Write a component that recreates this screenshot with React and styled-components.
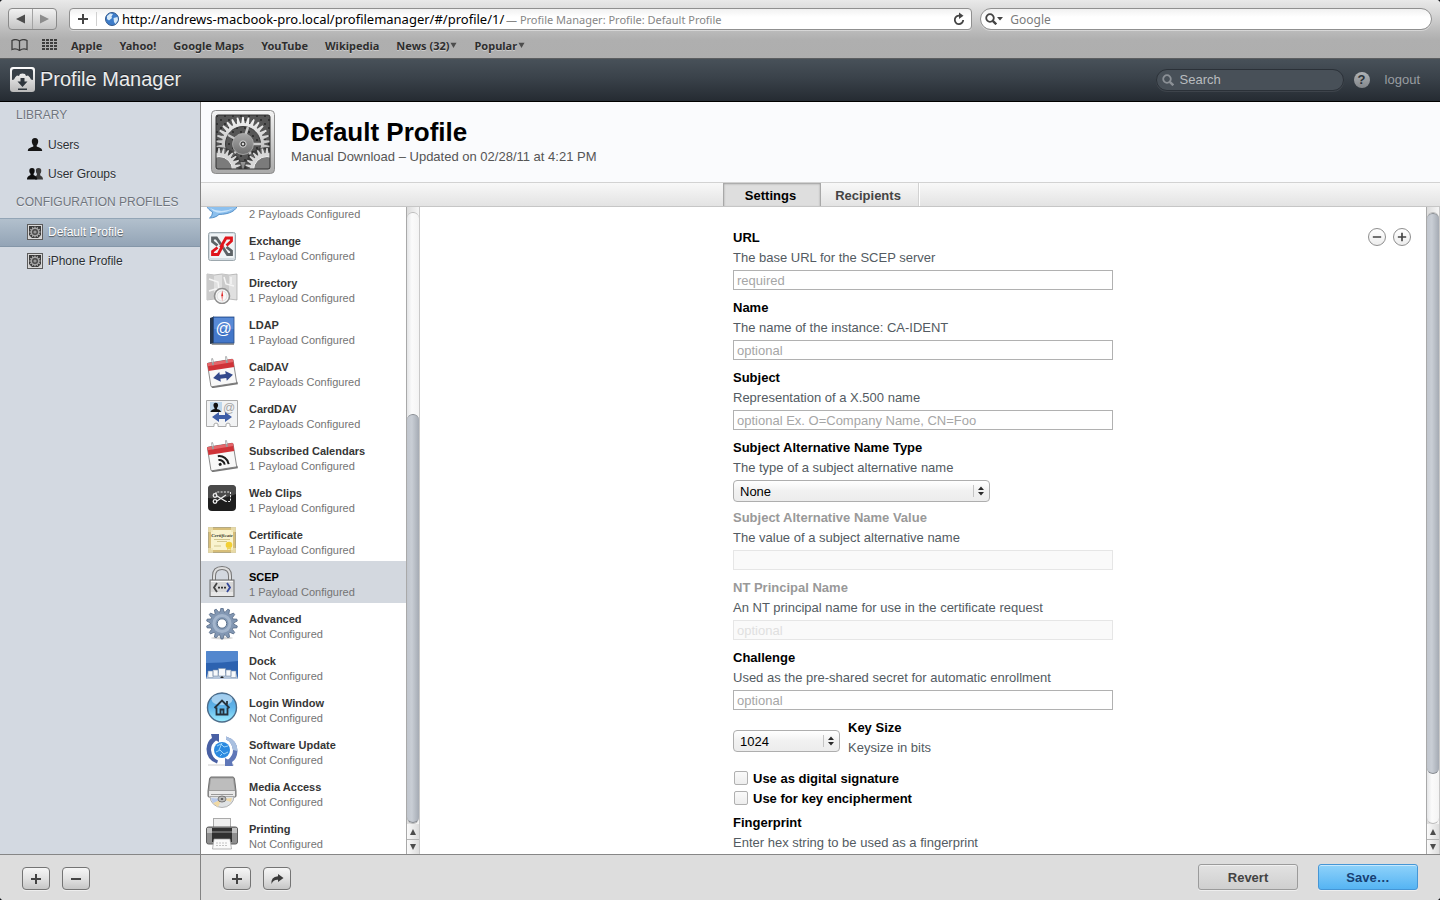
import React, { useLayoutEffect, useRef } from 'react'
import styled, { createGlobalStyle, css } from 'styled-components'

const GlobalStyle = createGlobalStyle`
  * {
    box-sizing: border-box;
  }

  body {
    margin: 0;
    background: #16181c;
    font-family: "Liberation Sans", Arial, sans-serif;
    font-size: 13px;
  }

  button, input, select {
    font-family: inherit;
    font-size: inherit;
    margin: 0;
  }

  svg {
    display: block;
    flex: none;
  }
`

const Window = styled.div`
  display: flex;
  flex-direction: column;
  height: 100vh;
  overflow: hidden;
  border-radius: 4px;
  background: white;
`

/* Browser toolbar */

const Chrome = styled.header`
  font-family: "Noto Sans", "Open Sans", sans-serif;
  background: linear-gradient(#e9e9e9 0, #d6d6d6 14px, #b9b9b9 32px, #afafaf 40px, #aeaeae 100%);
  border-bottom: 1px solid #5c5e60;
`

const AddressRow = styled.div`
  display: grid;
  grid-template-columns: auto 2fr 1fr;
  gap: 8px;
  padding: 8px 8px 4px;
`

const HistoryGroup = styled.div`
  display: flex;
  width: 49px;
  height: 22px;
  margin-right: 4px;
  border: 1px solid #8a8a8a;
  border-radius: 4px;
  background: linear-gradient(#f2f2f2, #c4c4c4);
`

const HistoryButton = styled.button`
  display: flex;
  flex: 1;
  align-items: center;
  justify-content: center;
  padding: 0;
  border: 0;
  background: none;

  & + & {
    border-left: 1px solid #a3a3a3;
  }
`

const AddressBar = styled.div`
  display: flex;
  align-items: center;
  height: 22px;
  padding: 0 6px 0 0;
  border: 1px solid #909090;
  border-radius: ${props => (props.$round ? '11px' : '4px')};
  background: linear-gradient(#f1f1f1, white 8px);
  box-shadow: 0 1px 0 rgba(255, 255, 255, 0.4);
  min-width: 0;
`

const BarButton = styled.button`
  display: flex;
  align-items: center;
  justify-content: center;
  width: ${props => props.$width}px;
  height: 14px;
  padding: 0;
  border: 0;
  background: none;
`

const AddButton = styled(BarButton)`
  border-right: 1px solid #d0d0d0;
  margin-right: 8px;
`

const UrlInput = styled.input`
  width: 387px;
  height: 20px;
  padding: 0 0 0 3px;
  border: 0;
  outline: 0;
  background: none;
  color: black;
  font-size: 13px;
`

const PageTitle = styled.span`
  flex: 1;
  overflow: hidden;
  white-space: nowrap;
  color: #868686;
  font-size: 11px;
`

const GoogleInput = styled.input`
  flex: 1;
  min-width: 0;
  padding: 0 3px;
  border: 0;
  outline: 0;
  background: none;
  font-size: 12px;

  &::placeholder {
    color: #7b7b7b;
    opacity: 1;
  }
`

const Toolbar = styled.nav`
  display: flex;
  align-items: center;
  gap: 14px;
  height: 24px;
  padding: 0 11px 2px;
`

const Bookmarks = styled.div`
  display: flex;
  gap: 17px;
`

const Bookmark = styled.a`
  display: flex;
  align-items: center;
  gap: 1px;
  color: #2e2e2e;
  font-size: 11px;
  font-weight: bold;
  text-decoration: none;
  text-shadow: 0 1px 0 rgba(255, 255, 255, 0.4);
  white-space: nowrap;
`

/* Application header */

const AppBar = styled.header`
  display: flex;
  align-items: center;
  height: 43px;
  padding: 0 20px 1px 10px;
  border-bottom: 1px solid black;
  background: linear-gradient(#485159, #3a424a 45%, #252b32);
`

const AppTitle = styled.h1`
  flex: 1;
  margin: 0 0 0 5px;
  color: #ececec;
  font-size: 20px;
  font-weight: normal;
  text-shadow: 0 -1px 0 rgba(0, 0, 0, 0.5);
`

const SearchBox = styled.label`
  display: flex;
  align-items: center;
  width: 188px;
  height: 22px;
  padding: 0 6px 0 5px;
  border: 1px solid #2b3138;
  border-radius: 11px;
  background: #485058;
  box-shadow: 0 1px 0 rgba(255, 255, 255, 0.08);
`

const SearchInput = styled.input`
  width: 100%;
  padding: 0 6px;
  border: 0;
  outline: 0;
  background: none;
  color: white;

  &::placeholder {
    color: #b9bcbf;
    opacity: 1;
  }
`

const HelpButton = styled.button`
  width: 16px;
  height: 16px;
  margin: 0 15px 0 10px;
  padding: 0;
  border: 0;
  border-radius: 50%;
  background: linear-gradient(#b0b3b6, #82868a);
  color: #2b3138;
  font-weight: bold;
  line-height: 16px;
`

const LogoutLink = styled.a`
  color: #999da1;
  text-decoration: none;
`

/* Sidebar */

const Body = styled.div`
  display: flex;
  flex: 1;
  min-height: 0;
`

const Column = styled.div`
  display: flex;
  flex-direction: column;
  min-height: 0;
`

const SidebarColumn = styled(Column)`
  flex: none;
  width: 201px;
  border-right: 1px solid #838383;
`

const MainColumn = styled(Column)`
  flex: 1;
  min-width: 0;
`

const Sidebar = styled.nav`
  flex: 1;
  background: #d3d9e1;
`

const GroupTitle = styled.h2`
  margin: 0;
  padding: 0 0 2px 16px;
  color: #6f757d;
  font-size: 12px;
  font-weight: normal;
  line-height: 27px;
  text-shadow: 0 1px 0 rgba(255, 255, 255, 0.6);
`

const NavLink = styled.a`
  display: flex;
  align-items: center;
  gap: 5px;
  height: 29px;
  padding: 0 0 2px 27px;
  color: #2b2f33;
  font-size: 12px;
  text-decoration: none;
  text-shadow: 0 1px 0 rgba(255, 255, 255, 0.5);

  ${props => props.$active && css`
    border-top: 1px solid #93a5b6;
    border-bottom: 1px solid #8496a8;
    background: linear-gradient(#b2c0cd, #93a4b6);
    color: white;
    text-shadow: 0 1px 1px rgba(0, 0, 0, 0.5);
  `}
`

const Footer = styled.footer`
  display: flex;
  align-items: flex-end;
  gap: ${props => props.$gap}px;
  height: 46px;
  padding: 0 22px 10px;
  border-top: 1px solid #868686;
  background: #dddddd;
`

const ToolGroup = styled.div`
  display: flex;
  flex: 1;
  gap: 12px;
`

const ToolButton = styled.button`
  display: flex;
  align-items: center;
  justify-content: center;
  width: 28px;
  height: 23px;
  padding: 0;
  border: 1px solid #747474;
  border-radius: 4px;
  background: linear-gradient(#f6f6f6, #e2e2e2 50%, #c6c6c6);
  box-shadow: 0 1px 0 #eeeeee;
`

const ActionButton = styled.button`
  width: 100px;
  height: 26px;
  border: 1px solid ${props => (props.$primary ? '#4596d6' : '#9b9b9b')};
  border-radius: 3px;
  background: ${props => (props.$primary
    ? 'linear-gradient(#8fd2fa, #55b4f3)'
    : 'linear-gradient(#e2e2e2, #cfcfcf)')};
  box-shadow: inset 0 1px 0 rgba(255, 255, 255, 0.5), 0 1px 0 #eeeeee;
  color: ${props => (props.$primary ? '#173f73' : '#434343')};
  font-weight: bold;
`

/* Profile header and tabs */

const ProfileHeader = styled.div`
  display: flex;
  align-items: center;
  gap: 16px;
  height: 80px;
  padding: 0 10px;
  background: #fafbfd;
`

const ProfileTitle = styled.h2`
  margin: 0;
  color: black;
  font-size: 26px;
  line-height: 30px;
`

const ProfileMeta = styled.p`
  margin: 0;
  color: #555555;
  line-height: 20px;
`

const TabBar = styled.div`
  display: flex;
  justify-content: center;
  height: 25px;
  border-top: 1px solid #d2d2d2;
  border-bottom: 1px solid #c6c6c6;
  background: linear-gradient(#f8f8f8, #e3e3e3);
`

const Tab = styled.button`
  width: 98px;
  padding: 2px 2px 0 0;
  border: 0;
  border-right: 1px solid ${props => (props.$active ? '#a8a8a8' : '#d2d2d2')};
  border-left: ${props => (props.$active ? '1px solid #a8a8a8' : 0)};
  background: ${props => (props.$active ? '#dedede' : 'none')};
  box-shadow: ${props => (props.$active ? 'inset 0 1px 2px rgba(0, 0, 0, 0.3)' : '1px 0 0 white')};
  color: ${props => (props.$active ? 'black' : '#444444')};
  font-weight: bold;
`

const Panels = styled.div`
  display: flex;
  flex: 1;
  min-height: 0;
`

/* Payload list */

const PayloadList = styled.div`
  width: 205px;
  overflow-y: auto;
  scrollbar-width: none;
`

const PayloadRow = styled.a`
  display: flex;
  gap: 11px;
  height: 42px;
  padding: 5px;
  background: ${props => (props.$active ? '#d3d8df' : 'white')};
  color: ${props => (props.$active ? 'black' : '#363636')};
  font-size: 11px;
  line-height: 15px;
  text-decoration: none;
`

const PayloadText = styled.div`
  padding-top: 4px;
  white-space: nowrap;
`

const PayloadStatus = styled.div`
  color: #747474;
`

/* Scroll bars */

const Bar = styled.div`
  display: flex;
  flex: none;
  flex-direction: column;
  width: 14px;
  border-right: 1px solid #c9c9c9;
  border-left: 1px solid #a9a9a9;
  background: linear-gradient(to right, #dcdcdc, #f6f6f6);
`

const Track = styled.div`
  display: flex;
  flex: 1;
  flex-direction: column;
  margin-top: 5px;
  border: 1px solid #bcbcbc;
  border-width: 1px 0;
  border-radius: 7px;
  background: linear-gradient(to right, #e4e5e7, #fbfbfb 40%, #f4f4f4);
`

const TrackSpace = styled.div`
  flex: ${props => props.$size} 0 0;
`

const Thumb = styled.div`
  flex: ${props => props.$size} 0 0;
  border: 1px solid #85898f;
  border-width: 1px 0;
  border-radius: 7px;
  background: linear-gradient(to right, #c0c5cd, #c9ced5 40%, #a5abb4);
`

const ArrowButton = styled.button`
  display: flex;
  align-items: center;
  justify-content: center;
  height: 15px;
  padding: 0;
  border: 0;
  background: linear-gradient(to right, #fafafa, #dddddd);

  & + & {
    border-top: 1px solid #b5b5b5;
  }
`

/* Settings form */

const Settings = styled.div`
  display: grid;
  flex: 1;
  grid-template-columns: 1fr 380px 1fr;
  align-content: start;
  padding-top: 20px;
  overflow: hidden;
`

const Form = styled.form`
  grid-column: 2;
  padding-top: 1px;
`

const RowTools = styled.div`
  display: flex;
  align-items: center;
  justify-content: flex-end;
  gap: 7px;
  height: 20px;
  padding-right: 15px;
`

const RoundButton = styled.button`
  display: flex;
  align-items: center;
  justify-content: center;
  width: 18px;
  height: 18px;
  padding: 0;
  border: 1px solid #8e8e8e;
  border-radius: 50%;
  background: linear-gradient(white, #ededed);
`

const Field = styled.div`
  min-height: 70px;
  line-height: 20px;
`

const FieldLabel = styled.label`
  display: block;
  color: ${props => (props.$disabled ? '#999999' : 'black')};
  font-weight: bold;
`

const FieldHint = styled.div`
  color: #535b62;
`

const TextInput = styled.input`
  display: block;
  width: 100%;
  height: 20px;
  margin-top: 2px;
  padding: 0 3px;
  border: 1px solid #b1b1b1;
  outline: 0;
  background: white;

  &::placeholder {
    color: #a6a6a6;
    opacity: 1;
  }

  &:disabled {
    border-color: #e6e6e6;
    background: #fafafa;
  }

  &:disabled::placeholder {
    color: #e0e0e0;
  }
`

const SelectWrap = styled.div`
  position: relative;
  width: ${props => props.$width}px;
`

const Select = styled.select`
  display: block;
  appearance: none;
  width: 100%;
  height: 22px;
  padding: 0 24px 0 6px;
  border: 1px solid #aeaeae;
  border-radius: 4px;
  outline: 0;
  background: linear-gradient(white, #f1f1f1 50%, #ececec);
  color: black;
`

const SelectArrows = styled.svg`
  position: absolute;
  top: 5px;
  right: 3px;
  pointer-events: none;
`

const TypeSelect = styled(SelectWrap)`
  margin-top: 2px;
`

const KeySizeRow = styled.div`
  display: flex;
  align-items: center;
  gap: 8px;
  margin-bottom: 10px;
  line-height: 20px;
`

const KeySelect = styled(SelectWrap)`
  margin-top: 6px;
`

const CheckLabel = styled.label`
  display: flex;
  align-items: center;
  gap: 5px;
  height: 20px;
  padding-left: 1px;
  font-weight: bold;
`

const Checkbox = styled.input`
  appearance: none;
  width: 14px;
  height: 14px;
  border: 1px solid #b0b0b0;
  border-radius: 2px;
  background: linear-gradient(#fafafa, #ededed);
`

const CheckGroup = styled.div`
  margin-bottom: 5px;
`

/* Drawings */

const gear = (cx, cy, teeth, outer, inner) => {
  const step = (Math.PI * 2) / teeth
  const points = []
  for (let i = 0; i < teeth; i++) {
    const a = i * step - Math.PI / 2
    ;[[-0.38, inner], [-0.14, outer], [0.14, outer], [0.38, inner]].forEach(([t, r]) => {
      points.push(`${(cx + Math.cos(a + t * step) * r).toFixed(2)} ${(cy + Math.sin(a + t * step) * r).toFixed(2)}`)
    })
  }
  return `M${points.join('L')}Z`
}

const GearTile = ({ size, id }) => (
  <svg width={size} height={size} viewBox="0 0 64 64">
    <defs>
      <linearGradient id={`${id}f`} x1="0" y1="0" x2="0" y2="1">
        <stop offset="0" stopColor="#f4f4f4" />
        <stop offset="1" stopColor="#a9a9a9" />
      </linearGradient>
      <linearGradient id={`${id}m`} x1="0" y1="0" x2="0" y2="1">
        <stop offset="0" stopColor="#f6f6f6" />
        <stop offset="0.7" stopColor="#b4b4b4" />
        <stop offset="1" stopColor="#777777" />
      </linearGradient>
      <linearGradient id={`${id}h`} x1="0" y1="0" x2="0" y2="1">
        <stop offset="0" stopColor="#a8a8a8" />
        <stop offset="1" stopColor="#6f6f6f" />
      </linearGradient>
      <clipPath id={`${id}c`}>
        <rect x="5" y="5" width="54" height="54" rx="2" />
      </clipPath>
      <pattern id={`${id}p`} width="8" height="8" patternUnits="userSpaceOnUse">
        <rect width="8" height="8" fill="#565656" />
        <circle cx="2" cy="2" r="1" fill="#262626" />
        <circle cx="6" cy="6" r="1" fill="#262626" />
      </pattern>
    </defs>
    <rect x="0.5" y="0.5" width="63" height="63" rx="4" fill={`url(#${id}f)`} stroke="#8c8c8c" />
    <rect x="5" y="5" width="54" height="54" rx="2" fill={`url(#${id}p)`} />
    <g clipPath={`url(#${id}c)`}>
      <path d={gear(32, 34, 30, 27, 21)} fill={`url(#${id}m)`} />
      <circle cx="32" cy="34" r="17.500" fill={`url(#${id}p)`} stroke="#3c3c3c" />
      <path d="M33 29 37 17M36 34H50M30 32 17 25M30 36 20 47M34 37 43 48" stroke="#c8c8c8" strokeWidth="2.4" />
      <circle cx="32" cy="34" r="10.500" fill={`url(#${id}h)`} stroke="#b0b0b0" strokeWidth="0.800" />
      <circle cx="32" cy="34" r="3.200" fill="#444" stroke="#ddd" />
      <circle cx="32" cy="34" r="1.200" fill="#ddd" />
      <circle cx="8" cy="60" r="23" fill="#333" opacity="0.700" />
      <circle cx="56" cy="60" r="23" fill="#333" opacity="0.700" />
      <path d={gear(8, 60, 28, 22, 17)} fill="#d8d8d8" />
      <circle cx="8" cy="60" r="13.500" fill="#7b7b7b" stroke="#f2f2f2" />
      <path d={gear(56, 60, 28, 22, 17)} fill="#d8d8d8" />
      <circle cx="56" cy="60" r="13.500" fill="#7b7b7b" stroke="#f2f2f2" />
    </g>
    <rect x="5" y="5" width="54" height="54" rx="2" fill="none" stroke="#333" />
  </svg>
)

const SmallTile = () => (
  <svg width="16" height="16" viewBox="0 0 16 16">
    <rect x="0.5" y="0.5" width="15" height="15" fill="#d8d8d8" stroke="#5b5b5b" />
    <rect x="2" y="2" width="12" height="12" fill="#3a3a3a" />
    <path d={gear(8, 8, 12, 5.6, 4.3)} fill="#a5a5a5" />
    <circle cx="8" cy="8" r="3" fill="#4a4a4a" />
    <circle cx="8" cy="8" r="1.6" fill="#999" />
    <path d="M2 14v-3l3 3zM14 14v-3l-3 3z" fill="#ccc" />
  </svg>
)

const person = 'M8 1C5.800 1 4.600 2.600 4.800 4.800 4.900 6.400 5.600 7.600 6.300 8.300V9.600C5.400 10.400 0.800 10.400 0.800 14H15.200C15.200 10.400 10.600 10.400 9.700 9.600V8.300C10.400 7.600 11.100 6.400 11.200 4.800 11.400 2.600 10.200 1 8 1Z'

const UserIcon = () => (
  <svg width="16" height="16" viewBox="0 0 16 16">
    <path d={person} fill="#151515" />
  </svg>
)

const GroupIcon = () => (
  <svg width="16" height="16" viewBox="0 0 16 16">
    <path d="M11.500 2C9.500 2 8.700 3.300 8.900 5 9 6.300 9.300 7.200 9.900 7.800V9C9.600 9.800 8 10 8 13.500H16C16 10.200 14 10.200 13.200 9.200V7.800C13.800 7.200 14.200 6.300 14.300 5 14.400 3.300 13.500 2 11.500 2Z" fill="#3b3b3b" />
    <path d="M5 2C3 2 2.200 3.300 2.300 5 2.400 6.300 2.900 7.200 3.500 7.800V9C2.700 9.800 0 10 0 13.500H10.200C10.200 10 7.400 9.800 6.600 9V7.800C7.200 7.200 7.600 6.300 7.700 5 7.800 3.300 7 2 5 2Z" fill="#0e0e0e" />
  </svg>
)

const AppLogo = () => (
  <svg width="25" height="25" viewBox="0 0 25 25">
    <defs>
      <linearGradient id="logo" x1="0" y1="0" x2="0" y2="1">
        <stop offset="0" stopColor="#ffffff" />
        <stop offset="1" stopColor="#b9b9b9" />
      </linearGradient>
    </defs>
    <rect width="25" height="25" rx="3" fill="url(#logo)" />
    <path d="M2 13V4Q2 2 4 2H21Q23 2 23 4V13L21 12.500A10 10 0 0 0 18 8.500L16 9 15 7Q12.500 6 10 7L9 9 7 8.500A10 10 0 0 0 4 12.500Z" fill="#373f47" />
    <path d="M10.500 11H14.500V14.500H17.500L12.500 20 7.500 14.500H10.500ZM8 21.500H17V23H8Z" fill="#2f363d" />
  </svg>
)

const Calendar = ({ children }) => (
  <g transform="rotate(-9 16 17)">
    <path d="M3 28H30V30.500H4Z" fill="#777" />
    <rect x="3" y="5" width="26" height="24" rx="1" fill="#f8f8f8" stroke="#777" strokeWidth="0.800" />
    <rect x="3" y="5" width="26" height="8" fill="#cf3338" />
    <rect x="3" y="5" width="26" height="3" fill="#e5666a" />
    <path d="M8.500 7V2M22.500 7V2" stroke="#9a9a9a" strokeWidth="2" strokeLinecap="round" />
    <path d="M8.500 5V2M22.500 5V2" stroke="#e8eef2" strokeWidth="0.800" />
    {children}
  </g>
)

const doubleArrow = 'M0 5 7 0V3H13V0L20 5 13 10V7H7V10Z'

const drawings = {
  chat: (
    <>
      <path d="M16 5C7 5 0.500 9.500 0.500 16 0.500 19.500 3 22 6.500 24 6.500 27 5 29 3.500 30 7.500 30 11 28.500 13 26.400 23 26.500 31.500 22.500 31.500 16 31.500 9.500 25 5 16 5Z" fill="#8cc0ee" stroke="#5590c8" />
      <path d="M4 20Q15 26 28 20Q20 25.500 11 24.500Q7 23.500 4 20Z" fill="#c9e4fb" />
    </>
  ),
  exchange: (
    <>
      <rect x="2.500" y="2.500" width="27" height="28" rx="2" fill="#d5dde2" stroke="#9ca7ad" />
      <rect x="4" y="4" width="24" height="24" rx="1" fill="#f0f4f6" />
      <g fill="none" strokeWidth="2.800">
        <path d="M15 14.500 10.500 8H6.500V11.500L11.500 15.500" stroke="#5d6366" />
        <path d="M17 17.500 21.500 24.500H25.500V21L20.500 17" stroke="#5d6366" />
        <path d="M14.500 17.500 20 8H25.500V11L20.500 15.500" stroke="#e0151b" />
        <path d="M17 15 12 24.500H6.500V21.500L11.500 17.500" stroke="#e0151b" />
      </g>
    </>
  ),
  directory: (
    <>
      <path d="M1 2 8 3 16 2 23 3 31 2V28L23 27 16 28 8 27 1 28Z" fill="#e0e0e0" stroke="#a3a3a3" strokeWidth="0.700" />
      <path d="M1 2 8 3V27L1 28ZM16 2 23 3V27L16 28Z" fill="#cbcbcb" />
      <path d="M3 7 12 10 13 18M18 5 20 12 28 14M3 19 10 17 14 24M25 5V12" stroke="#f5f5f5" strokeWidth="1.500" fill="none" />
      <circle cx="16" cy="24" r="7.500" fill="#f8f8f8" stroke="#909090" strokeWidth="1.600" />
      <circle cx="16" cy="24" r="5" fill="none" stroke="#ccc" strokeWidth="0.600" />
      <path d="M15.200 24 16.200 18.500 17.200 24Z" fill="#d22" />
      <path d="M15.200 24 16.200 29.500 17.200 24Z" fill="#e88" />
    </>
  ),
  ldap: (
    <>
      <path d="M5 29H28V31H6Z" fill="#333" opacity="0.500" />
      <path d="M4 4 8 2.500V29L4 30Z" fill="#26374e" />
      <rect x="7.500" y="3" width="20.500" height="26" fill="#4377c9" stroke="#264b86" strokeWidth="0.800" />
      <rect x="8" y="4" width="19.500" height="11" fill="#6898e0" opacity="0.600" />
      <text x="17.500" y="20" fontSize="16" textAnchor="middle" fill="white" fontFamily="Liberation Sans, sans-serif">@</text>
    </>
  ),
  caldav: (
    <Calendar>
      <path d={doubleArrow} transform="translate(6.500 15.500)" fill="#33498c" />
    </Calendar>
  ),
  carddav: (
    <>
      <path d="M0.500 2.500H31.500V28.500H24V26Q22 24 20 26V28.500H12V26Q10 24 8 26V28.500H0.500Z" fill="#f2f3f4" stroke="#aaa" />
      <rect x="4" y="4" width="12" height="10" fill="#bed7ec" />
      <path d={person} transform="translate(4 4) scale(0.720)" fill="#111" />
      <text x="23" y="14" fontSize="12" textAnchor="middle" fill="#a5a5a5" fontFamily="Liberation Sans, sans-serif">@</text>
      <path d={doubleArrow} transform="translate(6 14)" fill="#3e5ea7" />
    </>
  ),
  subscribed: (
    <Calendar>
      <g fill="none" stroke="#1d1d1d" strokeWidth="2">
        <path d="M12 19.500A5.500 5.500 0 0 1 17.500 25M12 15.500A9.500 9.500 0 0 1 21.500 25" />
      </g>
      <circle cx="13" cy="24" r="1.500" fill="#1d1d1d" />
    </Calendar>
  ),
  webclips: (
    <>
      <rect x="2" y="3" width="28" height="26" rx="4" fill="#1e1e1e" />
      <path d="M2 16V7Q2 3 6 3H26Q30 3 30 7V12Q16 18 2 16Z" fill="#5d5d5d" opacity="0.700" />
      <path d="M10 12V10H24.500V19.500H20" fill="none" stroke="#eee" strokeDasharray="2 1.300" />
      <g stroke="#eee" fill="none" strokeWidth="1.300">
        <path d="M11 14 20 19.500M11 19 20 13" />
        <circle cx="9" cy="13.500" r="1.800" />
        <circle cx="9" cy="19.500" r="1.800" />
      </g>
    </>
  ),
  certificate: (
    <>
      <rect x="2.500" y="3.500" width="27" height="25" fill="#d7be79" stroke="#b4a983" />
      <rect x="5" y="6" width="22" height="20" fill="#f9f3cf" />
      <path d="M2 3H7V8H2ZM25 3H30V8H25ZM2 24H7V29H2ZM25 24H30V29H25Z" fill="#efe5b8" opacity="0.700" />
      <text x="16" y="13" fontSize="5" fontStyle="italic" fontWeight="bold" textAnchor="middle" fill="#3c3c2d" fontFamily="Liberation Serif, serif">Certificate</text>
      <path d="M8 15.500H24M11 17.500H21M8 22H15" stroke="#c9bb80" strokeWidth="0.800" />
      <circle cx="23" cy="21" r="3.300" fill="#f2cf34" />
      <path d="M21 23V26L23 25 25 26V23Z" fill="#ecd257" />
    </>
  ),
  scep: (
    <>
      <path d="M8 15V10Q8 2 16 2 24 2 24 10V15" fill="none" stroke="#777" strokeWidth="4" />
      <path d="M8 15V10Q8 2 16 2 24 2 24 10V15" fill="none" stroke="#dedede" strokeWidth="2" />
      <rect x="4" y="14" width="24" height="16.500" fill="#d7d7d7" stroke="#6b6b6b" />
      <path d="M5 15.500H27M5 27H27M5 29H27" stroke="#f8f8f8" />
      <g fill="none" stroke="#444" strokeWidth="1.800">
        <path d="M11 17 8 21.500 11 26" />
        <path d="M21 17 24 21.500 21 26" stroke="#34489b" />
      </g>
      <path d="M12 20.700H14V22.500H12ZM15 20.700H17V22.500H15ZM18 20.700H20V22.500H18Z" fill="#333" />
    </>
  ),
  advanced: (
    <>
      <ellipse cx="16" cy="30" rx="11" ry="1.500" fill="#bbb" opacity="0.600" />
      <path d={gear(16, 15.500, 14, 15.500, 11.800)} fill="#8297b3" stroke="#566a85" strokeWidth="0.800" />
      <circle cx="16" cy="15.500" r="9.500" fill="#a3b5cc" />
      <circle cx="16" cy="15.500" r="6.500" fill="#8298b4" />
      <circle cx="16" cy="15.500" r="4.700" fill="white" stroke="#5d728d" />
    </>
  ),
  dock: (
    <>
      <rect x="0" y="1" width="32" height="28" rx="1" fill="#2c62b0" />
      <path d="M0 1H32V11Q16 13 0 13Z" fill="#6497dc" opacity="0.700" />
      <path d="M2 23H30L32 29H0Z" fill="#b6c6db" />
      <path d="M2 21H7V27.500H2ZM7 20H12V26H7ZM12.500 18.500H19.500V26H12.500ZM20 20H25V26H20ZM25 21H30V27.500H25Z" fill="#f7f9fb" stroke="#8296b0" strokeWidth="0.600" />
      <path d="M16 26 18 28H14Z" fill="#222" />
    </>
  ),
  login: (
    <>
      <defs>
        <linearGradient id="orb" x1="0" y1="0" x2="0" y2="1">
          <stop offset="0" stopColor="#4f9ad6" />
          <stop offset="0.500" stopColor="#5fb4ea" />
          <stop offset="1" stopColor="#9ceeff" />
        </linearGradient>
      </defs>
      <circle cx="16" cy="15.500" r="14.500" fill="url(#orb)" stroke="#4c6c8a" strokeWidth="1.400" />
      <ellipse cx="16" cy="7.500" rx="10.500" ry="5.500" fill="#d9edfb" opacity="0.600" />
      <path d="M8.500 16 16 8.500 23.500 16M21 12.500V9M10.500 15.500V22.500H21.500V15.500M14.500 22.500V17.500H17.500V22.500" fill="none" stroke="#26323c" strokeWidth="1.800" />
    </>
  ),
  update: (
    <>
      <path d="M2 31H28" stroke="#ccc" />
      <circle cx="16" cy="16" r="8" fill="#2c8ae0" />
      <path d="M11 12 15 10 18 13 22 12M10 18 14 16 18 20 22 18M14 22 16 20M16 9 13 16" stroke="#b9e8ff" strokeWidth="0.800" fill="none" />
      <path d="M11 29.500Q0.500 26 0.500 15 1 7 6 4L5 0H13V8L10 6.500Q5 10 5 16 6 24 12 26.500Z" fill="#4960a4" />
      <path d="M20 2.500Q31.500 6 31.500 17 31 25 26 28L27 32H19V24L22 25.500Q27 22 27 16 26 8 20 5.500Z" fill="#5f77b8" />
      <path d="M20 2.500Q31.500 6 31.500 17L27 16Q26 8 20 5.500Z" fill="#a9c0e0" />
    </>
  ),
  media: (
    <>
      <path d="M5 1H27Q28 1 28.500 3L30 15V20Q30 21 29 21H3Q2 21 2 20V15L3.500 3Q4 1 5 1Z" fill="#9d9d9d" stroke="#6f6f6f" />
      <path d="M5 2.500H27L28.500 14H3.500Z" fill="#bdbdbd" />
      <rect x="3" y="15" width="26" height="5.500" fill="#e9e9e9" />
      <path d="M4 20.500H28A12 11 0 0 1 4 20.500Z" fill="#dfe2e4" stroke="#999" strokeWidth="0.700" />
      <path d="M16 23 7 27 12 31ZM16 23 26 22 25 26Z" fill="#f0d9a5" />
      <path d="M16 23 5 22 7 27Z" fill="#b7c9ec" />
      <ellipse cx="16" cy="23" rx="4" ry="3" fill="#bbb" stroke="#777" />
      <ellipse cx="16" cy="23" rx="1.300" ry="1" fill="#555" />
      <path d="M5 18.500H27" stroke="#999" />
    </>
  ),
  printing: (
    <>
      <rect x="7.500" y="0.500" width="17" height="14" fill="#efefef" stroke="#aaa" />
      <rect x="0.500" y="9" width="31" height="17" rx="2" fill="#8f8f8f" stroke="#5d5d5d" />
      <rect x="1" y="10" width="30" height="5" fill="#c2c2c2" />
      <rect x="6" y="10" width="20" height="14" fill="#303030" />
      <path d="M6 14H26" stroke="#999" />
      <path d="M8 21H24L25.500 31H6.500Z" fill="#fafafa" stroke="#9a9a9a" strokeWidth="0.700" />
      <path d="M10 25H22M10 27.500H21" stroke="#c4c4c4" strokeDasharray="2 1" />
    </>
  ),
}

const PayloadIcon = ({ name }) => (
  <svg width="32" height="32" viewBox="0 0 32 32">{drawings[name]}</svg>
)

const Triangle = ({ d, width = 8, height = 8, fill = '#4d4d4d' }) => (
  <svg width={width} height={height} viewBox="0 0 8 8">
    <path d={d} fill={fill} />
  </svg>
)

const Plus = ({ size = 12 }) => (
  <svg width={size} height={size} viewBox="0 0 12 12">
    <path d="M6 1V11M1 6H11" stroke="#444444" strokeWidth="2" />
  </svg>
)

const Minus = ({ size = 12 }) => (
  <svg width={size} height={size} viewBox="0 0 12 12">
    <path d="M1 6H11" stroke="#444444" strokeWidth="2" />
  </svg>
)

const Globe = () => (
  <svg width="14" height="14" viewBox="0 0 14 14">
    <circle cx="7" cy="7" r="6.500" fill="#3d7cc9" stroke="#345a8d" />
    <path d="M2 4 5 1.500 8 2 6.500 4.500 7 6 4 8.500 2 7ZM8.500 6 12.500 5 13 8 10.500 12 9 10Z" fill="#d6e9f8" />
  </svg>
)

const Magnifier = ({ color, caret }) => (
  <svg width={caret ? 18 : 12} height="12" viewBox={caret ? '0 0 18 12' : '0 0 12 12'}>
    <circle cx="5" cy="5" r="3.800" fill="none" stroke={color} strokeWidth="1.800" />
    <path d="M7.800 7.800 11.300 11.300" stroke={color} strokeWidth="2.400" />
    {caret && <path d="M12 4H18L15 7.500Z" fill={color} />}
  </svg>
)

const BookIcon = () => (
  <svg width="17" height="12" viewBox="0 0 17 12">
    <path d="M8.500 2Q5 -0.500 1 1.500V10.500Q5 9 8.500 11.500 12 9 16 10.500V1.500Q12 -0.500 8.500 2V11" fill="none" stroke="#3d3d3d" strokeWidth="1.300" />
  </svg>
)

const GridIcon = () => (
  <svg width="15" height="12" viewBox="0 0 15 12">
    {[0, 4, 8, 12].map(x => [0, 3, 6, 9].map(y => (
      <rect key={`${x}-${y}`} x={x} y={y} width="3" height="2" fill="#3d3d3d" />
    )))}
  </svg>
)

const ScrollBar = ({ before, size, after }) => (
  <Bar>
    <Track>
      <TrackSpace $size={before} />
      <Thumb $size={size} />
      <TrackSpace $size={after} />
    </Track>
    <ArrowButton aria-label="Scroll up"><Triangle d="M4 1 7 7H1Z" /></ArrowButton>
    <ArrowButton aria-label="Scroll down"><Triangle d="M4 7 7 1H1Z" /></ArrowButton>
  </Bar>
)

const Arrows = () => (
  <SelectArrows width="14" height="12" viewBox="0 0 14 12">
    <path d="M0.500 0V12" stroke="#c4c4c4" />
    <path d="M8 1.500 11 5H5ZM8 10.500 11 7H5Z" fill="#2b2b2b" />
  </SelectArrows>
)

const TextField = ({ id, label, hint, placeholder, disabled }) => (
  <Field>
    <FieldLabel htmlFor={id} $disabled={disabled}>{label}</FieldLabel>
    <FieldHint>{hint}</FieldHint>
    <TextInput id={id} type="text" placeholder={placeholder} disabled={disabled} />
  </Field>
)

const bookmarks = [
  { title: 'Apple' },
  { title: 'Yahoo!' },
  { title: 'Google Maps' },
  { title: 'YouTube' },
  { title: 'Wikipedia' },
  { title: 'News (32)', menu: true },
  { title: 'Popular', menu: true },
]

const payloads = [
  { icon: 'chat', title: 'iChat', status: '2 Payloads Configured' },
  { icon: 'exchange', title: 'Exchange', status: '1 Payload Configured' },
  { icon: 'directory', title: 'Directory', status: '1 Payload Configured' },
  { icon: 'ldap', title: 'LDAP', status: '1 Payload Configured' },
  { icon: 'caldav', title: 'CalDAV', status: '2 Payloads Configured' },
  { icon: 'carddav', title: 'CardDAV', status: '2 Payloads Configured' },
  { icon: 'subscribed', title: 'Subscribed Calendars', status: '1 Payload Configured' },
  { icon: 'webclips', title: 'Web Clips', status: '1 Payload Configured' },
  { icon: 'certificate', title: 'Certificate', status: '1 Payload Configured' },
  { icon: 'scep', title: 'SCEP', status: '1 Payload Configured', active: true },
  { icon: 'advanced', title: 'Advanced', status: 'Not Configured' },
  { icon: 'dock', title: 'Dock', status: 'Not Configured' },
  { icon: 'login', title: 'Login Window', status: 'Not Configured' },
  { icon: 'update', title: 'Software Update', status: 'Not Configured' },
  { icon: 'media', title: 'Media Access', status: 'Not Configured' },
  { icon: 'printing', title: 'Printing', status: 'Not Configured' },
]

const BrowserChrome = () => (
  <Chrome>
    <AddressRow>
      <HistoryGroup>
        <HistoryButton aria-label="Back"><Triangle d="M0 4 8 0V8Z" width={9} height={10} /></HistoryButton>
        <HistoryButton aria-label="Forward"><Triangle d="M8 4 0 0V8Z" width={9} height={10} fill="#8d8d8d" /></HistoryButton>
      </HistoryGroup>
      <AddressBar>
        <AddButton aria-label="Add bookmark" $width={27}><Plus /></AddButton>
        <Globe />
        <UrlInput aria-label="Address" defaultValue="http://andrews-macbook-pro.local/profilemanager/#/profile/1/" />
        <PageTitle>— Profile Manager: Profile: Default Profile</PageTitle>
        <BarButton aria-label="Reload" $width={12}>
          <svg width="12" height="14" viewBox="0 0 12 14">
            <path d="M10.200 8A4.200 4.200 0 1 1 7 3.800" fill="none" stroke="#444" strokeWidth="1.800" />
            <path d="M6 0.500 10.500 3.800 6 7Z" fill="#444" />
          </svg>
        </BarButton>
      </AddressBar>
      <AddressBar $round>
        <BarButton aria-label="Search engines" $width={26}><Magnifier color="#444444" caret /></BarButton>
        <GoogleInput aria-label="Google" placeholder="Google" />
      </AddressBar>
    </AddressRow>
    <Toolbar>
      <BookIcon />
      <GridIcon />
      <Bookmarks>
        {bookmarks.map(item => (
          <Bookmark key={item.title} href="#">
            {item.title}
            {item.menu && <Triangle d="M0 1H8L4 8Z" width={7} height={6} />}
          </Bookmark>
        ))}
      </Bookmarks>
    </Toolbar>
  </Chrome>
)

const App = () => {
  const list = useRef(null)

  useLayoutEffect(() => {
    list.current.scrollTop = 24
  }, [])

  return (
    <Window>
      <GlobalStyle />
      <BrowserChrome />
      <AppBar>
        <AppLogo />
        <AppTitle>Profile Manager</AppTitle>
        <SearchBox>
          <Magnifier color="#8b9096" />
          <SearchInput aria-label="Search" placeholder="Search" />
        </SearchBox>
        <HelpButton aria-label="Help">?</HelpButton>
        <LogoutLink href="#">logout</LogoutLink>
      </AppBar>
      <Body>
        <SidebarColumn>
          <Sidebar>
            <GroupTitle>LIBRARY</GroupTitle>
            <NavLink href="#"><UserIcon />Users</NavLink>
            <NavLink href="#"><GroupIcon />User Groups</NavLink>
            <GroupTitle>CONFIGURATION PROFILES</GroupTitle>
            <NavLink href="#" $active><SmallTile />Default Profile</NavLink>
            <NavLink href="#"><SmallTile />iPhone Profile</NavLink>
          </Sidebar>
          <Footer $gap={12}>
            <ToolButton aria-label="Add profile"><Plus /></ToolButton>
            <ToolButton aria-label="Remove profile"><Minus /></ToolButton>
          </Footer>
        </SidebarColumn>
        <MainColumn>
          <ProfileHeader>
            <GearTile size={64} id="tile" />
            <div>
              <ProfileTitle>Default Profile</ProfileTitle>
              <ProfileMeta>Manual Download – Updated on 02/28/11 at 4:21 PM</ProfileMeta>
            </div>
          </ProfileHeader>
          <TabBar>
            <Tab $active>Settings</Tab>
            <Tab>Recipients</Tab>
          </TabBar>
          <Panels>
            <PayloadList ref={list}>
              {payloads.map(item => (
                <PayloadRow key={item.title} href="#" $active={item.active}>
                  <PayloadIcon name={item.icon} />
                  <PayloadText>
                    <strong>{item.title}</strong>
                    <PayloadStatus>{item.status}</PayloadStatus>
                  </PayloadText>
                </PayloadRow>
              ))}
            </PayloadList>
            <ScrollBar before={33} size={67} after={0} />
            <Settings>
              <Form>
                <TextField id="url" label="URL" hint="The base URL for the SCEP server" placeholder="required" />
                <TextField id="name" label="Name" hint="The name of the instance: CA-IDENT" placeholder="optional" />
                <TextField id="subject" label="Subject" hint="Representation of a X.500 name" placeholder="optional Ex. O=Company Name, CN=Foo" />
                <Field>
                  <FieldLabel htmlFor="alt-type">Subject Alternative Name Type</FieldLabel>
                  <FieldHint>The type of a subject alternative name</FieldHint>
                  <TypeSelect $width={257}>
                    <Select id="alt-type" defaultValue="None"><option>None</option></Select>
                    <Arrows />
                  </TypeSelect>
                </Field>
                <TextField id="alt-value" label="Subject Alternative Name Value" hint="The value of a subject alternative name" disabled />
                <TextField id="nt-name" label="NT Principal Name" hint="An NT principal name for use in the certificate request" placeholder="optional" disabled />
                <TextField id="challenge" label="Challenge" hint="Used as the pre-shared secret for automatic enrollment" placeholder="optional" />
                <KeySizeRow>
                  <KeySelect $width={107}>
                    <Select id="key-size" defaultValue="1024"><option>1024</option></Select>
                    <Arrows />
                  </KeySelect>
                  <div>
                    <FieldLabel htmlFor="key-size">Key Size</FieldLabel>
                    <FieldHint>Keysize in bits</FieldHint>
                  </div>
                </KeySizeRow>
                <CheckGroup>
                  <CheckLabel><Checkbox type="checkbox" />Use as digital signature</CheckLabel>
                  <CheckLabel><Checkbox type="checkbox" />Use for key encipherment</CheckLabel>
                </CheckGroup>
                <TextField id="fingerprint" label="Fingerprint" hint="Enter hex string to be used as a fingerprint" placeholder="optional" />
              </Form>
              <RowTools>
                <RoundButton aria-label="Remove payload"><Minus size={10} /></RoundButton>
                <RoundButton aria-label="Add payload"><Plus size={10} /></RoundButton>
              </RowTools>
            </Settings>
            <ScrollBar before={0} size={92} after={8} />
          </Panels>
          <Footer $gap={20}>
            <ToolGroup>
              <ToolButton aria-label="Add payload"><Plus /></ToolButton>
              <ToolButton aria-label="Share">
                <svg width="14" height="12" viewBox="0 0 14 12">
                  <path d="M8 1 13.500 5 8 9V6.800Q3.500 6.500 1.500 11 0.500 4 8 3.200Z" fill="#3b3b3b" />
                </svg>
              </ToolButton>
            </ToolGroup>
            <ActionButton>Revert</ActionButton>
            <ActionButton $primary>Save…</ActionButton>
          </Footer>
        </MainColumn>
      </Body>
    </Window>
  )
}

export default App
